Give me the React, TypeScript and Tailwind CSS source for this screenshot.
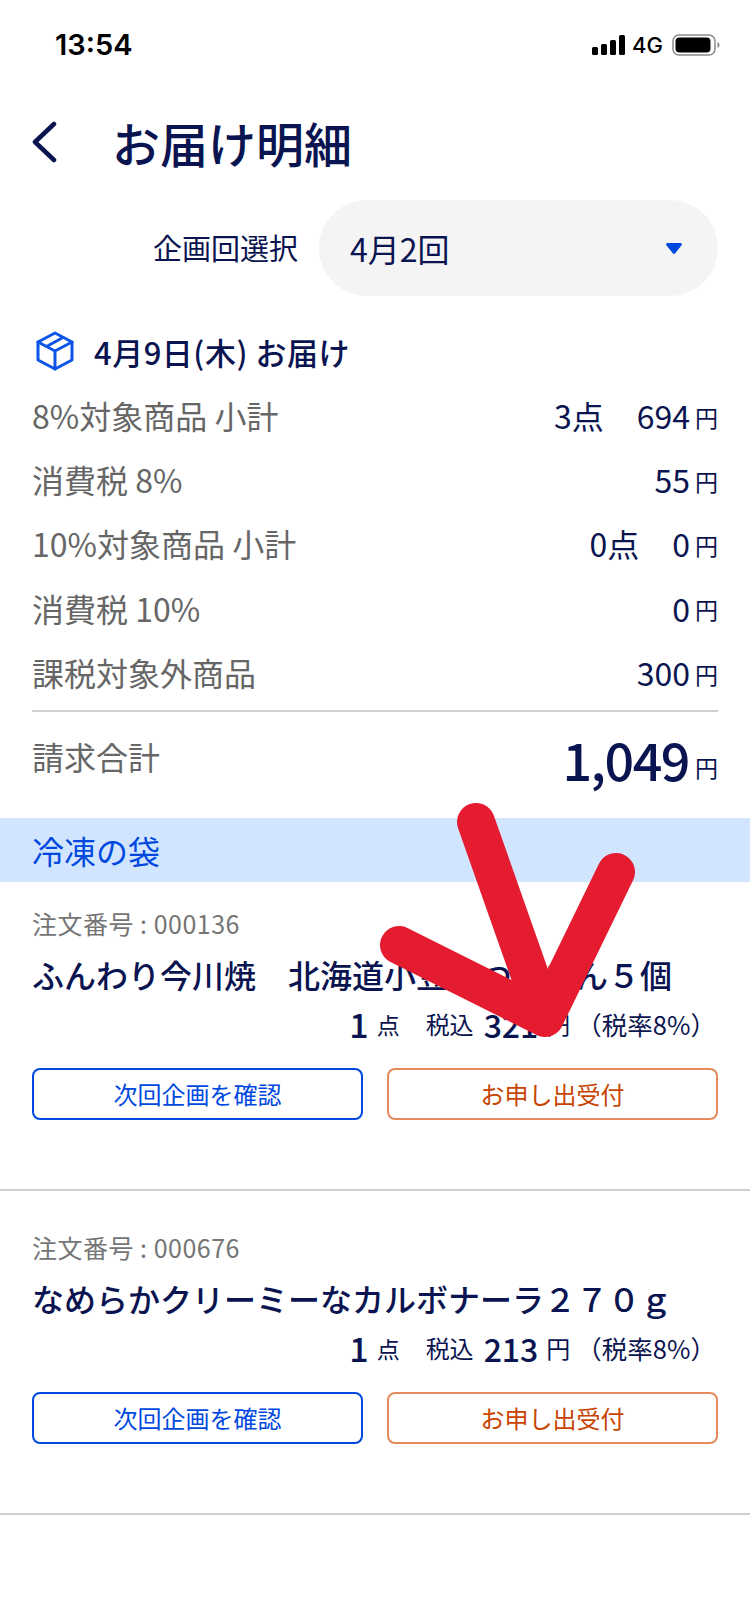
const NAVY = "text-[#0a1450]";

const summary = [
  { label: "8%対象商品 小計", count: "3点", value: "694" },
  { label: "消費税 8%", value: "55" },
  { label: "10%対象商品 小計", count: "0点", value: "0" },
  { label: "消費税 10%", value: "0" },
  { label: "課税対象外商品", value: "300" },
];

const orders = [
  { no: "000136", name: "ふんわり今川焼　北海道小豆のつぶあん５個", price: "321" },
  { no: "000676", name: "なめらかクリーミーなカルボナーラ２７０ｇ", price: "213" },
];

function StatusBar() {
  return (
    <div className="h-[90px] flex items-center justify-between pl-[55px] pr-[30px] text-black">
      <span className="font-['Inter',sans-serif] text-[29px] font-semibold">13:54</span>
      <div className="flex items-center gap-[7px]">
        <div className="flex items-end gap-[3px]">
          <span className="w-[6px] h-[8px] rounded-[1.5px] bg-black" />
          <span className="w-[6px] h-[11px] rounded-[1.5px] bg-black" />
          <span className="w-[6px] h-[15px] rounded-[1.5px] bg-black" />
          <span className="w-[6px] h-[20px] rounded-[1.5px] bg-black" />
        </div>
        <span className="font-['Inter',sans-serif] text-[22px] leading-none font-medium">4G</span>
        <svg width="48" height="22" viewBox="0 0 48 22" className="ml-[2px]">
          <rect x="1" y="1" width="42" height="20" rx="6" fill="none" stroke="#8a8a8a" strokeWidth="1.5" />
          <rect x="3.500" y="3.500" width="35" height="15" rx="4" fill="#000" />
          <path d="M45.500 8v6c1.200-.6 2-1.700 2-3s-.8-2.400-2-3z" fill="#8a8a8a" />
        </svg>
      </div>
    </div>
  );
}

function Header() {
  return (
    <div className={`h-[104px] flex items-center ${NAVY}`}>
      <svg width="28" height="42" viewBox="0 0 28 42" fill="none" stroke="currentColor" strokeWidth="4.500" strokeLinecap="round" strokeLinejoin="round" className="ml-[30px] shrink-0">
        <path d="M24 3L5 21l19 18" />
      </svg>
      <h1 className="ml-[54px] text-[48px] leading-none font-medium">お届け明細</h1>
    </div>
  );
}

function PlanSelect() {
  return (
    <div className="flex items-center justify-end gap-[21px] pr-[32px] mt-[6px]">
      <span className={`text-[29px] ${NAVY}`}>企画回選択</span>
      <div className={`w-[399px] h-[96px] rounded-[48px] bg-[#f4f4f4] flex items-center justify-between pl-[31px] pr-[36px] ${NAVY}`}>
        <span className="text-[32px] leading-none">4月2回</span>
        <svg width="16" height="11" viewBox="0 0 16 11">
          <path d="M1.500 0h13c1.200 0 1.800 1.300 1.100 2.200L9.200 10.300c-.6.900-1.800.9-2.400 0L.4 2.200C-.3 1.300.3 0 1.500 0z" fill="#0048e0" />
        </svg>
      </div>
    </div>
  );
}

function DeliveryTitle() {
  return (
    <div className="flex items-center mt-[35px] pl-[36px] h-[40px]">
      <svg width="38" height="40" viewBox="0 0 38 40" fill="none" stroke="#0d55e8" strokeWidth="3" strokeLinejoin="round" strokeLinecap="round">
        <path d="M19 2l17 9v18l-17 9-17-9V11z" />
        <path d="M2 11l17 9 17-9M19 20v18M10.500 15.500L27 6.500" />
      </svg>
      <span className={`ml-[20px] mt-[2px] text-[31px] font-medium tracking-[0.5px] ${NAVY}`}>4月9日(木) お届け</span>
    </div>
  );
}

function Summary() {
  return (
    <div className="px-[32px] pt-[12px]">
      <div className="border-b-2 border-[#cfcfcf] pb-[6px]">
        {summary.map((row) => (
          <div key={row.label} className="h-[64.200px] flex items-center justify-between">
            <span className="text-[32px] text-[#666666]">{row.label}</span>
            <span className={`flex items-center text-[32px] ${NAVY}`}>
              {row.count && <span className="mr-[33px]">{row.count}</span>}
              <span>{row.value}</span>
              <span className="ml-[5px] text-[23px] mt-[4px]">円</span>
            </span>
          </div>
        ))}
      </div>
      <div className="h-[100px] flex items-center justify-between">
        <span className="text-[32px] text-[#666666] -mt-[12px]">請求合計</span>
        <span className={`flex items-center pb-[6px] ${NAVY}`}>
          <span className="text-[52px] leading-none font-medium tracking-[-1.500px]">1,049</span>
          <span className="ml-[6px] text-[23px] mt-[16px]">円</span>
        </span>
      </div>
    </div>
  );
}

function OrderCard({ no, name, price }: { no: string; name: string; price: string }) {
  return (
    <div className="pt-[35px] first:pt-[20px] pb-[69px] px-[32px] border-b-2 border-[#cfcfcf]">
      <div className="h-[44px] flex items-center text-[25px] text-[#757575] tracking-[0.500px]">注文番号 : {no}</div>
      <div className={`h-[56px] flex items-center text-[32px] whitespace-nowrap font-medium ${NAVY}`}>{name}</div>
      <div className={`h-[44px] flex items-center justify-end pr-[2px] ${NAVY}`}>
        <span className="text-[34px] font-medium">1</span>
        <span className="ml-[8px] text-[23px]">点</span>
        <span className="ml-[26px] text-[24px]">税込</span>
        <span className="ml-[10px] text-[32px] font-medium">{price}</span>
        <span className="ml-[8px] text-[24px]">円</span>
        <span className="ml-[6px] text-[25.500px]">（税率8%）</span>
      </div>
      <div className="mt-[22px] flex gap-[24px]">
        <button className="flex-1 h-[52px] rounded-[8px] border-2 border-[#0048e0] text-[24px] text-[#0048e0]">
          次回企画を確認
        </button>
        <button className="flex-1 h-[52px] rounded-[8px] border-2 border-[#e58a5c] text-[24px] text-[#c84400]">
          お申し出受付
        </button>
      </div>
    </div>
  );
}

export default function App() {
  return (
    <div className="relative w-[750px] h-[1624px] bg-white overflow-hidden font-['Noto_Sans_CJK_JP','Noto_Sans',sans-serif]">
      <StatusBar />
      <Header />
      <PlanSelect />
      <DeliveryTitle />
      <Summary />
      <div className="mt-[6px] h-[64px] bg-[#d2e5ff] flex items-center px-[32px] text-[32px] text-[#0048e0]">冷凍の袋</div>
      <div>
        {orders.map((o) => (
          <OrderCard key={o.no} {...o} />
        ))}
      </div>
      {/* hand-drawn arrow on top of the screenshot */}
      <svg className="absolute left-0 top-0 pointer-events-none" width="750" height="1624" viewBox="0 0 750 1624" fill="none">
        <path d="M476 822L545 1018L616 872M399 945L545 1018" stroke="#e51c30" strokeWidth="38" strokeLinecap="round" strokeLinejoin="round" />
      </svg>
    </div>
  );
}
